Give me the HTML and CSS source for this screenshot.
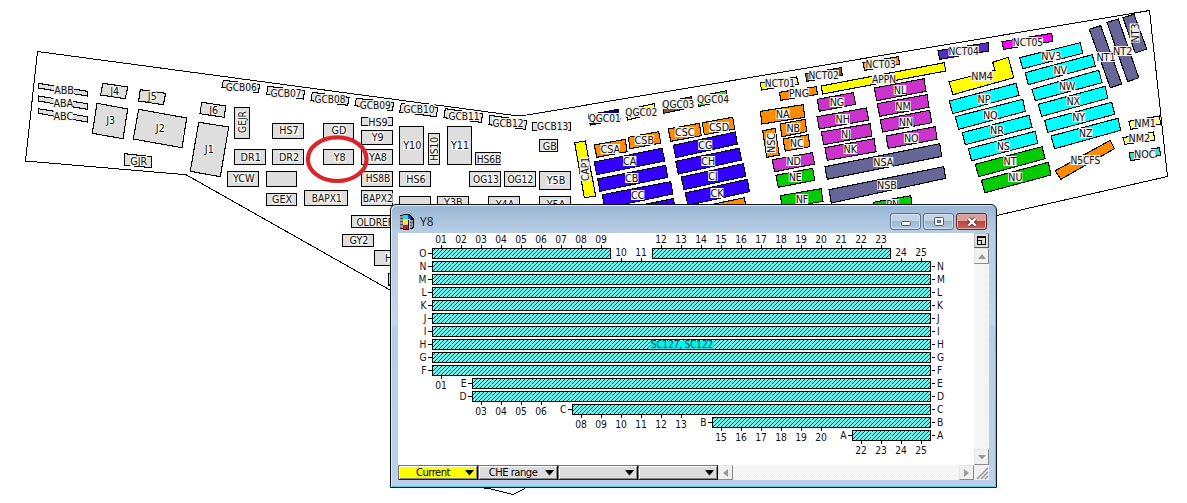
FILE: index.html
```html
<!DOCTYPE html>
<html lang="en">
<head>
<meta charset="utf-8">
<title>Yard map</title>
<link rel="stylesheet" href="styles.css">
</head>
<body>
<main class="yard">
  <svg class="map" id="map" width="1187" height="503" viewBox="0 0 1187 503">
    <path class="fence" d="M484 488.5H489L513 494.5L525 488.5M390 290L186 174.7L25.5 161L37.5 51.5L513 115.3L527 115L1149.5 10.5L1167.5 176.5L990 217"/>
    <g id="blocks"></g>
    <ellipse class="marker" cx="337.2" cy="159.2" rx="29.3" ry="21.8"/>
  </svg>

  <section class="window">
    <header class="titlebar">
      <svg class="app-icon" width="16" height="16" viewBox="0 0 16 16" shape-rendering="crispEdges">
        <path d="M1 1H4V0H10L14 4H15V13L13 15H10V16H4V15H1Z" fill="#111"/>
        <path d="M1 2H4V14H1ZM10 6H14V12L12 14H10Z" fill="#999"/>
        <path d="M4 1H9V5H4Z" fill="#19d8f4"/><path d="M9 1L12 4V6H9Z" fill="#1550c8"/>
        <path d="M4 6H9V10H4Z" fill="#ffe928"/><path d="M4 11H9V15H4Z" fill="#d41616"/>
        <path d="M1 4.500H4M1 7.500H4M1 10.500H4M10 8.500H14M10 11.500H13" stroke="#555"/>
        <path d="M4 5.500H10.500V15M4 10.500H9" fill="none" stroke="#ccc"/>
      </svg>
      <h1 class="title">Y8</h1>
      <div class="controls">
        <button class="control"><svg width="12" height="10"><rect x="1.5" y="4.500" width="9" height="4" rx="1" fill="#fff" stroke="#4d5b6e"/></svg></button>
        <button class="control"><svg width="12" height="10"><rect x="1.500" y=".5" width="9" height="8" rx="1" fill="#fff" stroke="#4d5b6e"/><rect x="4.500" y="3.500" width="3" height="2" fill="#9db6d2" stroke="#4d5b6e"/></svg></button>
        <button class="control close"><svg width="12" height="10"><path d="M2.500 1.500L9.500 8.500M9.500 1.500L2.500 8.500" stroke="#54353b" stroke-width="4"/><path d="M2.500 1.500L9.500 8.500M9.500 1.500L2.500 8.500" stroke="#fff" stroke-width="2.400"/></svg></button>
      </div>
    </header>
    <div class="client">
      <svg class="plan" id="plan" width="576" height="232" viewBox="398 233 576 232">
        <defs>
          <pattern id="hatch" width="4" height="4" patternUnits="userSpaceOnUse">
            <rect width="4" height="4" fill="#6ff5ef"/>
            <path d="M-1 5L5 -1M-1 1L1 -1M3 5L5 3" stroke="#003434" stroke-width=".9"/>
          </pattern>
        </defs>
      </svg>
      <div class="vscroll">
        <div class="btn zoom-btn"><svg width="9" height="9" shape-rendering="crispEdges"><path d="M0 0H9V9H0ZM1 2V8H8V2Z" fill="#000" fill-rule="evenodd"/><path d="M1 4H5V8H4V5H1Z" fill="#000"/></svg></div>
        <div class="btn"><svg width="8" height="5"><path d="M0 5L4 0L8 5Z" fill="#999"/></svg></div>
        <div class="track"></div>
        <div class="btn"><svg width="8" height="5"><path d="M0 0H8L4 4.500Z" fill="#999"/></svg></div>
      </div>
      <footer class="bottom">
        <div class="drop current"><span class="fit">Current</span><svg class="caret" width="9" height="6"><path d="M0 0H9L4.500 5.500Z"/></svg></div>
        <div class="drop"><span class="fit">CHE range</span><svg class="caret" width="9" height="6"><path d="M0 0H9L4.500 5.500Z"/></svg></div>
        <div class="drop"><span></span><svg class="caret" width="9" height="6"><path d="M0 0H9L4.500 5.500Z"/></svg></div>
        <div class="drop"><span></span><svg class="caret" width="9" height="6"><path d="M0 0H9L4.500 5.500Z"/></svg></div>
        <div class="btn"><svg width="5" height="8"><path d="M5 0V8L0 4Z" fill="#999"/></svg></div>
        <div class="track"></div>
        <div class="btn"><svg width="5" height="8"><path d="M0 0V8L5 4Z" fill="#999"/></svg></div>
        <div class="grip"><svg width="15" height="15"><path d="M3 14L14 3M7 14L14 7M11 14L14 11" stroke="#999" stroke-width="1.500"/></svg></div>
      </footer>
    </div>
  </section>
</main>
<script src="yard.js"></script>
</body>
</html>
```
FILE: styles.css
```css
body {
  margin: 0;
  background: #fff;
  font-family: "DejaVu Sans", sans-serif;
  font-size: 10px;
}
.yard { position: relative; width: 1187px; height: 503px; overflow: hidden; }
.map { display: block; }
.fence { fill: none; stroke: #000; stroke-width: 1; shape-rendering: crispEdges; }
.block { stroke: #000; stroke-width: 1.1; shape-rendering: crispEdges; }
.tag { fill: #f3f2ed; }
.label { fill: #111; font-size: 10px; }
.marker { fill: none; stroke: #d9252b; stroke-width: 4.2; }

.window {
  position: absolute;
  left: 390px;
  top: 204px;
  box-sizing: border-box;
  width: 607px;
  height: 284px;
  padding: 0 7px 7px;
  border: 1px solid #111;
  border-radius: 6px 6px 0 0;
  background: linear-gradient(#9ab5d3, #b8cee6 28px, #c2d6ec 120px, #b7cee7 121px, #b9d1ea);
  box-shadow: inset 1px 1px 0 #dce9f5, inset -1px -1px 0 #54cde6;
}
.titlebar { display: flex; align-items: center; height: 28px; box-sizing: border-box; padding: 4px 1px 0; }
.app-icon { margin-top: 2px; }
.title { margin: 1px 0 0 5px; font: 12px "Open Sans", sans-serif; color: #222; }
.controls { display: flex; gap: 2px; margin: 1px 0 0 auto; }
.control {
  display: flex;
  align-items: center;
  justify-content: center;
  box-sizing: border-box;
  width: 31px;
  height: 17px;
  padding: 0;
  border: 1px solid #5c728e;
  border-radius: 3px;
  background: linear-gradient(#c2d3e6 45%, #9db5d0 46%, #b4cae1);
  box-shadow: inset 0 0 0 1px #d3e0ee;
}
.close {
  border-color: #6b2a2e;
  background: linear-gradient(#dba09a 45%, #b9423a 46%, #c9655a);
  box-shadow: inset 0 0 0 1px #e0a9a4;
}
.controls .control { transform: translateX(-1px); }
.client {
  display: grid;
  grid-template: 232px 15px / 576px 15px;
  width: 591px;
  background: #fff;
}
.plan { display: block; background: #fff; }
.bar { fill: url(#hatch); stroke: #000; stroke-width: 1; }
.tick { stroke: #000; stroke-width: 1; shape-rendering: crispEdges; }
.joint { stroke: #9fc4c4; stroke-width: 1; stroke-dasharray: 2 1; shape-rendering: crispEdges; }
.found { fill: #00f4f4; }
.found-text { fill: #044; font-size: 10px; }
.vscroll { display: flex; flex-direction: column; }
.btn {
  display: flex;
  align-items: center;
  justify-content: center;
  flex: none;
  box-sizing: border-box;
  width: 15px;
  height: 16px;
  border: 1px solid;
  border-color: #e5e5e5 #8a8a8a #8a8a8a #e5e5e5;
  background: #f0f0f0;
}
.zoom-btn { height: 15px; border-color: #bbb #555 #555 #bbb; background: #ddd; }
.track { flex: 1; background: repeating-conic-gradient(#f0f0f0 0 25%, #fcfcfc 0 50%) 0 0 / 2px 2px; }
.bottom { grid-column: 1 / 3; display: flex; }
.bottom .btn { height: 15px; }
.drop {
  display: flex;
  align-items: center;
  box-sizing: border-box;
  width: 80px;
  height: 15px;
  padding: 0 3px 0 2px;
  border: 1px solid;
  border-color: #777 #000 #222 #777;
  background: #ddd;
  box-shadow: inset 1px 1px 0 #fff, inset -1px -1px 0 #888;
}
.drop span { flex: 1; text-align: center; white-space: nowrap; }
.fit { font-size: 10px; letter-spacing: -0.5px; }
.current { background: #ff0; }
.grip { width: 15px; height: 15px; background: #f0f0f0; }
```
FILE: yard.js
```js
const NS = "http://www.w3.org/2000/svg";
const GREY = "#dedede", BLUE = "#3300ff", ORANGE = "#ff8c00", YELLOW = "#ffff00",
  PURPLE = "#cc33cc", SLATE = "#666699", CYAN = "#00ffff", GREEN = "#00cc00";

function add(parent, name, attrs, text) {
  const el = document.createElementNS(NS, name);
  for (const key in attrs) el.setAttribute(key, attrs[key]);
  if (text) el.textContent = text;
  parent.appendChild(el);
  return el;
}

// Text is drawn slightly narrower than the font's own widths.
function tighten(el, ratio) {
  const width = el.getComputedTextLength() * ratio;
  el.setAttribute("textLength", width.toFixed(1));
  el.setAttribute("lengthAdjust", "spacingAndGlyphs");
  return width;
}

// Every section has its own origin; its coordinates are in thirds of a unit.
// A block is: label, corners ("x1,y1,x2,y2" for an upright box), label centre, fill, upright text.
const sections = [
  { x: 15, y: 40, blocks: [
    ["ABB", "70,130 217,154 217,168 70,144", 147, 150],
    ["ABA", "70,168 217,191 217,208 70,183", 145, 188],
    ["ABC", "70,206 217,230 217,246 70,220", 145, 227],
    ["J4", "263,130 338,141 331,176 257,165", 299, 152],
    ["J5", "376,149 452,160 445,194 371,183", 412, 169],
    ["J3", "246,190 338,207 324,296 232,280", 287, 241],
    ["J2", "371,208 515,234 501,323 355,297", 436, 265],
    ["J6", "560,187 633,198 627,232 555,221", 596, 210],
    ["J1", "551,247 641,261 616,410 526,394", 583, 328],
    ["GJR", "328,341 410,350 410,383 328,375", 371, 362]
  ] },
  { x: 215, y: 70, blocks: [
    ["GCB06", "25,31 134,44 130,68 21,52", 79, 50],
    ["GCB07", "159,49 269,62 265,87 155,72", 213, 68],
    ["GCB08", "292,67 402,82 398,106 288,92", 345, 86],
    ["GCB09", "424,85 536,97 532,122 420,107", 481, 104],
    ["GEJR", "58,112,103,206", 80, 157, GREY, true],
    ["HS7", "172,160,266,206", 222, 181],
    ["GD", "325,160,416,206", 372, 181],
    ["DR1", "58,238,152,284", 107, 261],
    ["DR2", "172,238,266,284", 222, 261],
    ["Y8", "325,238,416,284", 374, 261],
    ["YCW", "37,304,131,350", 86, 325],
    ["", "154,304,245,350", 0, 0],
    ["GEX", "154,370,245,406", 201, 388],
    ["BAPX1", "268,361,398,407", 335, 383],
    ["HS9", "439,142,533,167", 489, 155],
    ["Y9", "439,181,533,224", 488, 202],
    ["YA8", "439,238,533,284", 489, 261],
    ["HS8B", "439,304,533,350", 489, 325],
    ["BAPX2", "439,361,533,407", 488, 383]
  ] },
  { x: 340, y: 90, blocks: [
    ["GCB10", "184,41 293,52 289,80 179,66", 237, 58],
    ["GCB11", "316,56 428,72 423,97 312,83", 372, 77],
    ["GCB12", "450,76 560,92 556,118 447,104", 504, 98],
    ["GCB13", "578,97,691,122", 638, 109],
    ["Y10", "178,109,251,223", 217, 166],
    ["HS10", "265,130,299,224", 282, 176, GREY, true],
    ["Y11", "322,109,395,223", 360, 166],
    ["HS6B", "406,187,482,223", 447, 206],
    ["GB", "598,148,653,185", 629, 167],
    ["HS6", "178,244,272,290", 228, 266],
    ["OG13", "388,244,482,290", 438, 266],
    ["OG12", "493,244,587,290", 541, 266],
    ["Y5B", "598,244,692,299", 648, 270],
    ["", "178,320,272,360", 0, 0],
    ["Y3B", "292,320,386,360", 340, 337],
    ["Y4A", "445,320,539,360", 495, 343],
    ["Y5A", "598,320,692,360", 648, 343],
    ["OLDREF", "34,377,170,412", 104, 395],
    ["GY2", "7,433,101,469", 57, 451],
    ["HS5", "103,481,200,526", 164, 503],
    ["", "145,550,200,585", 0, 0]
  ] },
  { x: 565, y: 60, blocks: [
    ["QGC01", "70,165 159,148 166,177 76,195", 119, 173, "#000099"],
    ["QGC02", "183,150 267,131 270,160 187,180", 229, 155, "#ffff66"],
    ["QGC03", "292,128 380,110 382,142 296,160", 340, 133, "#8b5133"],
    ["QGC04", "399,110 484,92 487,121 402,139", 444, 116, "#33dd33"],
    ["CSA", "88,255 181,238 186,275 95,292", 136, 266, ORANGE],
    ["CSB", "190,232 281,215 287,249 195,266", 238, 241, ORANGE],
    ["CSC", "310,207 403,190 409,227 317,244", 359, 217, ORANGE],
    ["CSD", "412,188 503,172 509,207 418,224", 462, 200, ORANGE],
    ["CA", "88,306 291,265 299,303 95,344", 194, 303, BLUE],
    ["CB", "98,357 302,316 308,352 105,394", 200, 355, BLUE],
    ["CC", "112,404 317,365 323,402 120,445", 218, 404, BLUE],
    ["", "125,455 325,416 332,452 132,490", 0, 0, BLUE],
    ["CG", "325,256 511,216 517,252 332,293", 421, 254, BLUE],
    ["CH", "332,304 522,265 530,300 340,342", 430, 302, BLUE],
    ["CJ", "349,351 535,311 542,349 357,389", 444, 349, BLUE],
    ["CK", "361,399 547,358 553,395 369,436", 456, 398, BLUE],
    ["", "372,448 538,413 545,450 380,480", 0, 0, ORANGE],
    ["CAP1", "29,248 61,243 92,408 58,413", 59, 327, YELLOW, true]
  ] },
  { x: 745, y: 40, blocks: [
    ["NCT01", "45,129 155,111 160,132 50,150", 105, 130, YELLOW],
    ["PNG", "103,157 213,140 218,163 108,181", 162, 160, ORANGE],
    ["NCT02", "181,101 288,83 292,106 186,124", 236, 104, "#8b5a33"],
    ["NCT03", "354,68 460,50 464,73 359,91", 407, 71, "#f0922c"],
    ["APPN", "228,138 598,68 602,93 233,162", 417, 117, YELLOW],
    ["NA", "46,214 175,194 179,232 51,252", 113, 223, ORANGE],
    ["NB", "105,252 180,238 185,275 111,290", 145, 263, ORANGE],
    ["NC", "114,297 190,284 194,320 121,333", 155, 308, ORANGE],
    ["NSC", "53,272 90,265 103,345 65,352", 78, 309, ORANGE, true],
    ["ND", "82,359 202,338 209,372 89,395", 146, 364, PURPLE],
    ["NE", "93,406 203,385 209,421 100,442", 151, 412, GREEN],
    ["NF", "106,467 228,446 234,484 113,505", 171, 476, GREEN],
    ["NG", "217,178 325,158 332,193 223,214", 276, 185, PURPLE],
    ["NH", "216,230 364,204 371,240 223,267", 293, 237, PURPLE],
    ["NJ", "229,276 375,251 381,288 236,314", 303, 281, PURPLE],
    ["NK", "240,323 387,296 393,335 247,361", 316, 328, PURPLE],
    ["NL", "388,144 537,116 543,154 395,182", 465, 150, PURPLE],
    ["NM", "397,191 546,164 552,202 404,229", 474, 197, PURPLE],
    ["NN", "406,239 554,211 560,248 413,276", 483, 245, PURPLE],
    ["NO", "423,288 571,260 576,298 430,325", 499, 293, PURPLE],
    ["NSA", "240,380 584,311 590,349 247,418", 415, 366, SLATE],
    ["NSB", "252,449 596,380 602,415 259,489", 426, 434, SLATE],
    ["PN", "385,487 497,467 503,505 390,520", 443, 491, GREEN]
  ] },
  { x: 930, y: 0, blocks: [
    ["NCT04", "24,152 174,128 176,153 29,178", 101, 152, "#5a2bbf"],
    ["NCT05", "216,125 365,100 368,124 221,148", 294, 125, "#ff00ff"],
    ["NM4", "57,245 195,211 188,187 235,172 251,233 69,284", 156, 227, YELLOW],
    ["NV3", "269,173 451,128 458,160 278,206", 364, 167, CYAN],
    ["NV", "286,218 487,164 496,198 295,254", 391, 209, CYAN],
    ["NT1", "478,88 512,77 575,252 541,263", 528, 170, SLATE],
    ["NT2", "531,67 565,57 626,233 593,245", 578, 153, SLATE],
    ["NT3", "579,53 612,43 650,147 616,159", 614, 99, SLATE, true]
  ] },
  { x: 930, y: 80, blocks: [
    ["NW", "306,28 506,-29 516,8 316,62", 411, 17, CYAN],
    ["NX", "325,73 526,19 533,55 335,109", 430, 64, CYAN],
    ["NY", "344,121 545,67 554,103 353,157", 446, 112, CYAN],
    ["NZ", "363,168 564,115 572,151 374,206", 467, 160, CYAN],
    ["NP", "58,63 258,10 267,46 68,101", 162, 56, CYAN],
    ["NQ", "76,110 278,58 286,94 86,148", 181, 104, CYAN],
    ["NR", "97,158 297,106 306,142 106,194", 201, 150, CYAN],
    ["NS", "115,206 316,154 323,190 125,242", 220, 197, CYAN],
    ["NT", "136,253 336,200 345,236 146,290", 240, 244, GREEN],
    ["NU", "154,301 355,247 363,285 165,338", 256, 292, GREEN],
    ["N5CFS", "376,272 541,181 553,206 393,298", 466, 240, ORANGE],
    ["NM1", "597,124 688,108 692,132 602,148", 645, 128, "#ffff88"],
    ["NM2", "579,173 670,156 675,180 585,193", 628, 173, "#ffff88"],
    ["NOC", "597,219 688,203 692,226 602,242", 644, 221, "#33dddd"]
  ] }
];

const layer = document.getElementById("blocks");
for (const section of sections) {
  for (const [label, corners, lx, ly, fill = GREY, upright] of section.blocks) {
    const v = corners.split(/[ ,]/).map(Number);
    const flat = v.length === 4 ? [v[0], v[1], v[2], v[1], v[2], v[3], v[0], v[3]] : v;
    const points = flat.map((n, i) => ((i % 2 ? section.y : section.x) + n / 3).toFixed(1));
    add(layer, "polygon", { class: "block", points: points.join(" "), fill });
    if (!label) continue;
    const cx = section.x + lx / 3, cy = Math.round(section.y + ly / 3);
    const turn = upright ? ` rotate(-90)` : "";
    const g = add(layer, "g", { transform: `translate(${cx.toFixed(1)} ${cy})${turn}` });
    const tag = add(g, "rect", { class: "tag", y: -5, height: 10 });
    const text = add(g, "text", { class: "label", y: 4, "text-anchor": "middle" }, label);
    const w = tighten(text, label.length > 3 ? 0.91 : 0.96);
    tag.setAttribute("x", (-w / 2).toFixed(1));
    tag.setAttribute("width", w.toFixed(1));
  }
}

// Stacking plan: rows of 20-unit bays, one row every 13 units.
const plan = document.getElementById("plan");
const bayX = (bay) => 431.5 + (bay - 1) * 20;
const rows = [
  ["O", [[1, 9], [12, 23]]],
  ..."NMLKJIHGF".split("").map((name) => [name, [[1, 25]]]),
  ["E", [[3, 25]]], ["D", [[3, 25]]], ["C", [[8, 25]]], ["B", [[15, 25]]], ["A", [[22, 25]]]
];
function write(x, y, text, anchor) {
  tighten(add(plan, "text", { class: "label", x, y, "text-anchor": anchor }, text), 0.92);
}
rows.forEach(([name, spans], i) => {
  const top = 248.5 + i * 13;
  for (const [from, to] of spans) {
    add(plan, "rect", { class: "bar", x: bayX(from) + 1, y: top, width: (to - from + 1) * 20 - 2, height: 10 });
    for (let bay = from + 1; bay <= to; bay++) {
      add(plan, "line", { class: "joint", x1: bayX(bay), x2: bayX(bay), y1: top + 1.5, y2: top + 8.5 });
    }
  }
  const left = bayX(spans[0][0]);
  add(plan, "line", { class: "tick", x1: left - 4, x2: left, y1: top + 5, y2: top + 5 });
  write(left - 5, top + 8.5, name, "end");
  if (name !== "O") {
    add(plan, "line", { class: "tick", x1: 932, x2: 935, y1: top + 5, y2: top + 5 });
    write(937, top + 8.5, name, "start");
  }
});
// first bay, last bay, text baseline, tick top
const scales = [
  [1, 9, 243, 245], [12, 23, 243, 245], [10, 11, 256, 258], [24, 25, 256, 258],
  [1, 1, 389, 376], [3, 6, 415, 402], [8, 13, 428, 415], [15, 20, 441, 428], [22, 25, 454, 441]
];
for (const [from, to, baseline, tick] of scales) {
  for (let bay = from; bay <= to; bay++) {
    const x = bayX(bay) + 10;
    add(plan, "line", { class: "tick", x1: x, x2: x, y1: tick, y2: tick + 3 });
    write(x - 0.5, baseline, String(bay).padStart(2, "0"), "middle");
  }
}
add(plan, "rect", { class: "found", x: 650.5, y: 341, width: 63.5, height: 8 });
const found = add(plan, "text", { class: "found-text", x: 651, y: 348 }, "SC127, SC122");
found.setAttribute("textLength", "62");
found.setAttribute("lengthAdjust", "spacingAndGlyphs");
```
